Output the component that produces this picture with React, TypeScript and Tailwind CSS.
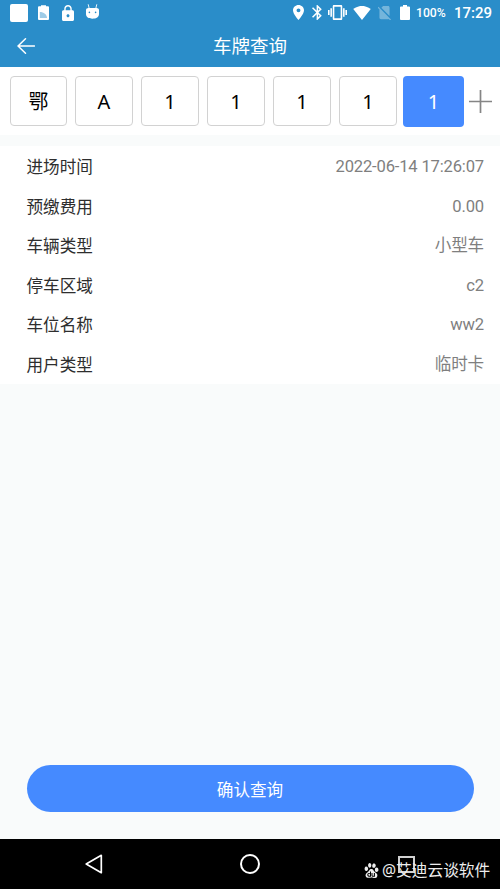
import type { ReactNode } from "react";
import clsx from "clsx";
import { SiBaidu } from "react-icons/si";

const plate = ["鄂", "A", "1", "1", "1", "1", "1"];
const activeIndex = 6;

const details = [
  { label: "进场时间", value: "2022-06-14 17:26:07" },
  { label: "预缴费用", value: "0.00" },
  { label: "车辆类型", value: "小型车" },
  { label: "停车区域", value: "c2" },
  { label: "车位名称", value: "ww2" },
  { label: "用户类型", value: "临时卡" },
];

type GlyphProps = {
  viewBox: string;
  className: string;
  children: ReactNode;
};

function Glyph({ viewBox, className, children }: GlyphProps) {
  return (
    <svg
      viewBox={viewBox}
      preserveAspectRatio="none"
      fill="currentColor"
      className={clsx("shrink-0", className)}
    >
      {children}
    </svg>
  );
}

function StatusBar() {
  return (
    <div className="flex h-[25px] items-center pr-[9px] pl-2.5 font-['Roboto',sans-serif] text-white">
      {/* Notifications */}
      <div className="h-[18px] w-[18px] rounded-[2px] bg-white" />
      <Glyph viewBox="0 0 11 15" className="ml-2.5 h-[15px] w-[11px]">
        <path d="M3 1.3V.3h5v1h2a1 1 0 0 1 1 1V14a1 1 0 0 1-1 1H1a1 1 0 0 1-1-1V2.3a1 1 0 0 1 1-1z" />
        <path
          d="M1.800 7c4 0 7.200 2.600 7.200 6H1.800z"
          fill="#2a8dc9"
          opacity="0.45"
        />
      </Glyph>
      <Glyph viewBox="4 1 16 21" className="ml-[13px] h-4 w-3">
        <path d="M18 8h-1V6c0-2.760-2.240-5-5-5S7 3.240 7 6v2H6c-1.100 0-2 .9-2 2v10c0 1.100.9 2 2 2h12c1.100 0 2-.9 2-2V10c0-1.100-.9-2-2-2zm-6 9c-1.100 0-2-.9-2-2s.9-2 2-2 2 .9 2 2-.9 2-2 2zm3.100-9H8.900V6c0-1.710 1.390-3.100 3.100-3.100s3.100 1.390 3.100 3.100z" />
      </Glyph>
      <Glyph viewBox="0 0 13 15" className="mb-0.5 ml-3 h-[15px] w-[13px]">
        <path
          d="M2.200 .3 3.200 4.500M10.800 .3 9.800 4.500"
          stroke="currentColor"
          strokeWidth="0.900"
        />
        <path
          fillRule="evenodd"
          d="M2.500 4h8C12 4 13 4.700 13 6v4c0 3-2.500 4.700-6.500 4.700S0 13 0 10V6c0-1.300 1-2 2.500-2zm.9 3.600a.8.8 0 1 0 0 1.600.8.8 0 0 0 0-1.600zm6.200 0a.8.8 0 1 0 0 1.600.8.8 0 0 0 0-1.600z"
        />
      </Glyph>

      {/* System state */}
      <div className="ml-auto flex items-center">
        <Glyph viewBox="5 2 14 20" className="h-[15px] w-[11px]">
          <path d="M12 2C8.130 2 5 5.130 5 9c0 5.250 7 13 7 13s7-7.750 7-13c0-3.870-3.130-7-7-7zm0 9.500a2.500 2.500 0 1 1 0-5 2.500 2.500 0 0 1 0 5z" />
        </Glyph>
        <Glyph viewBox="5 2 13 20" className="ml-2 h-[15px] w-[10px]">
          <path d="M17.710 7.710L12 2h-1v7.590L6.410 5 5 6.410 10.590 12 5 17.590 6.410 19 11 14.410V22h1l5.710-5.710-4.300-4.290 4.300-4.290zM13 5.830l1.880 1.880L13 9.590V5.830zm1.880 10.460L13 18.170v-3.760l1.880 1.880z" />
        </Glyph>
        <Glyph viewBox="0 3 24 18" className="ml-1.5 h-[15px] w-[19px]">
          <path d="M0 15h2V9H0v6zm3 2h2V7H3v10zm19-8v6h2V9h-2zm-3 8h2V7h-2v10zM16.500 3h-9C6.670 3 6 3.670 6 4.500v15c0 .83.67 1.500 1.500 1.500h9c.83 0 1.500-.67 1.500-1.500v-15c0-.83-.67-1.500-1.500-1.500zM16 19H8V5h8v14z" />
        </Glyph>
        <Glyph viewBox="0 3 24 18.500" className="ml-1.5 h-[14px] w-[18px]">
          <path d="M12.010 21.490L23.640 7c-.45-.34-4.930-4-11.640-4C5.280 3 .81 6.660.36 7l11.630 14.490.01.01.01-.01z" />
        </Glyph>
        <Glyph
          viewBox="3 3 18 19"
          className="ml-[7px] h-[14px] w-[13px] opacity-35"
        >
          <path d="M19 5c0-1.100-.9-2-2-2h-7L7.660 5.340 19 16.680V5zM3.650 3.880L2.380 5.150 5 7.770V19c0 1.100.9 2 2 2h10.010c.35 0 .67-.1.960-.26l1.880 1.880 1.270-1.270L3.650 3.880z" />
        </Glyph>
        <Glyph viewBox="7 2 10 20" className="ml-[9px] h-[15px] w-2.5">
          <path d="M15.670 4H14V2h-4v2H8.330C7.600 4 7 4.600 7 5.330v15.330C7 21.400 7.600 22 8.330 22h7.330c.74 0 1.340-.6 1.340-1.330V5.330C17 4.600 16.400 4 15.670 4z" />
        </Glyph>
        <span className="ml-1.5 w-[38px] pt-0.5 text-[12.200px] leading-none font-medium whitespace-nowrap">
          100%
        </span>
        <span className="w-[37px] pt-0.5 text-[15px] leading-none font-medium whitespace-nowrap">
          17:29
        </span>
      </div>
    </div>
  );
}

function TitleBar() {
  return (
    <div className="grid h-[42px] grid-cols-[1fr_auto_1fr] items-center text-white">
      <svg
        viewBox="0 0 18 16"
        fill="none"
        stroke="currentColor"
        strokeWidth="1.500"
        strokeLinecap="round"
        className="ml-[17px] h-4 w-[18px]"
      >
        <path d="M8.500.8 1 8l7.500 7.200M1 8h16.500" />
      </svg>
      <h1 className="text-[18.500px] leading-none">车牌查询</h1>
    </div>
  );
}

function PlateInput() {
  return (
    <section className="flex h-[68px] items-center bg-white pl-2.5">
      <div className="flex items-center gap-2">
        {plate.map((char, i) => (
          <div
            key={i}
            className={clsx(
              "flex h-[50px] items-center justify-center rounded-[4px] pt-0.5 text-[20px] leading-none",
              i === 0 ? "w-[57px]" : "w-[58px]",
              i === activeIndex
                ? "-ml-0.5 h-[51px] w-[61px] bg-[#458aff] text-white"
                : "border border-[#d2d2d2] text-black"
            )}
          >
            {char}
          </div>
        ))}
      </div>
      <svg
        viewBox="0 0 23 23"
        stroke="#858585"
        strokeWidth="1.700"
        className="ml-[5px] h-[23px] w-[23px]"
      >
        <path d="M11.500 0v23M0 11.500h23" />
      </svg>
    </section>
  );
}

function DetailList() {
  return (
    <dl className="mt-[11px] bg-white pr-4 pl-[26.500px] text-[16.600px]">
      {details.map(({ label, value }) => (
        <div
          key={label}
          className="flex h-[39.600px] items-center justify-between pt-[3px] leading-none"
        >
          <dt className="text-[#2e2e2e]">{label}</dt>
          <dd className="font-['Roboto','Noto_Sans_CJK_SC',sans-serif] tracking-[-0.180px] text-[#7f7f7f]">
            {value}
          </dd>
        </div>
      ))}
    </dl>
  );
}

function NavigationBar() {
  return (
    <nav className="relative flex h-[50px] items-center bg-black text-white">
      <svg
        viewBox="0 0 18 20"
        fill="none"
        stroke="currentColor"
        strokeWidth="1.700"
        strokeLinejoin="round"
        className="ml-[85px] h-5 w-[18px]"
      >
        <path d="M16.300 1.300v17.400L1.200 10z" />
      </svg>
      <div className="ml-[137px] h-5 w-5 rounded-full border-2 border-white" />
      <div className="ml-[138px] h-[17px] w-[17px] border-2 border-[#d0d0d0]" />

      {/* Author mark, drawn over the recents key */}
      <div className="absolute top-[21px] left-[364px] flex items-center text-[#ededed]">
        <SiBaidu className="h-[15px] w-[15px]" />
        <span className="ml-[3px] text-[15.700px] leading-5 whitespace-nowrap">
          @艾迪云谈软件
        </span>
      </div>
    </nav>
  );
}

export default function App() {
  return (
    <div className="flex h-[889px] w-[500px] flex-col overflow-hidden bg-[#f9fbfb] font-['Noto_Sans','Noto_Sans_CJK_SC',sans-serif]">
      <header className="bg-[#2a8dc9]">
        <StatusBar />
        <TitleBar />
      </header>

      <PlateInput />
      <DetailList />

      <div className="mt-auto px-[26.500px] pb-[27px]">
        <button className="h-[47px] w-full rounded-full bg-[#458aff] pt-[3px] text-[16.600px] leading-none text-white">
          确认查询
        </button>
      </div>

      <NavigationBar />
    </div>
  );
}
